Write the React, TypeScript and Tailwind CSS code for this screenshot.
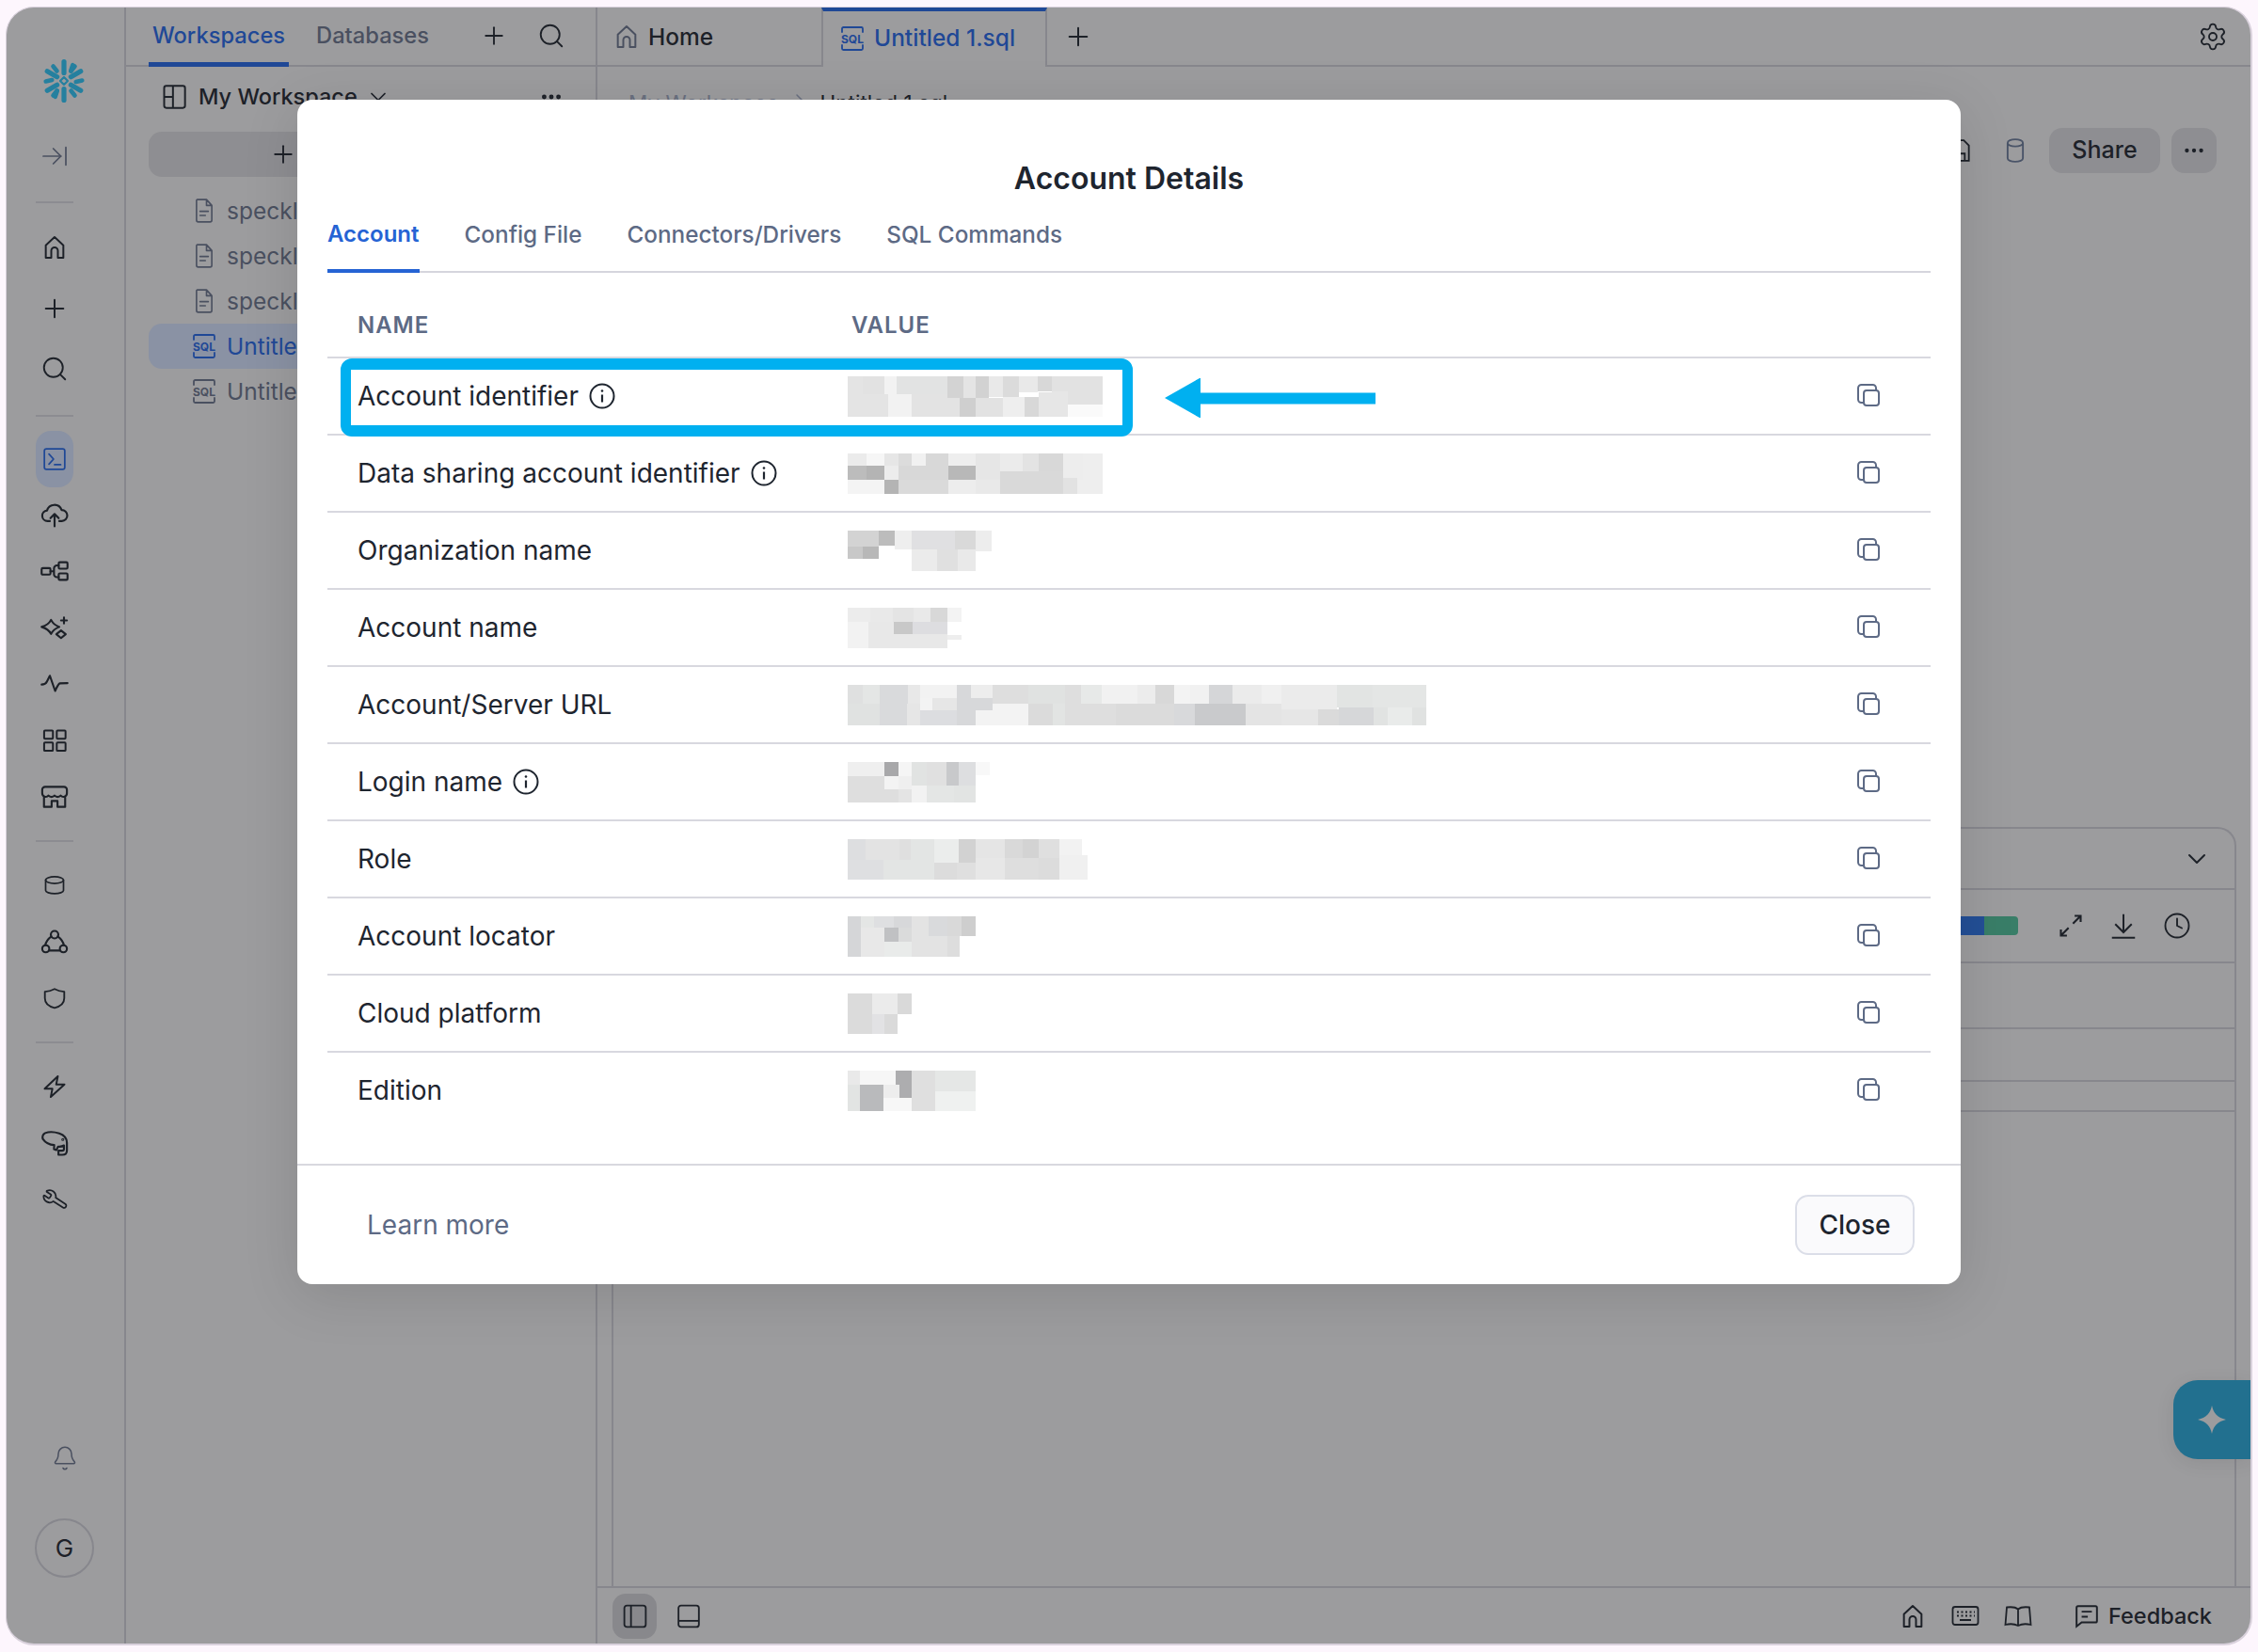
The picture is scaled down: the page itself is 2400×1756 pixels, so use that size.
import React from "react";
import { ArrowRightToLine, Plus, Search, Settings, ChevronDown, Wrench, Bell, Ellipsis, Clock, ChevronRight } from "lucide-react";

type IconProps = { size?: number; className?: string; sw?: number; children?: React.ReactNode };
const Ic = ({ size = 28, className = "", sw = 1.7, children }: IconProps) => (
  <svg width={size} height={size} viewBox="0 0 24 24" fill="none" stroke="currentColor" strokeWidth={sw} strokeLinejoin="round" strokeLinecap="round" className={className}>
    {children}
  </svg>
);

const HomeIc = (p: IconProps) => <Ic {...p}><path d="M4 21.500V10L12 2.500l8 7.500v11.500h-5v-6.500a3 3 0 0 0-6 0v6.500H4z" /></Ic>;
const TerminalIc = (p: IconProps) => <Ic {...p}><rect x="2" y="2" width="20" height="20" rx="2" /><path d="M6.500 7l4.500 5-4.500 5M12 17.500h6" /></Ic>;
const CloudIc = (p: IconProps) => <Ic {...p} size={30}><path d="M8 17.500H6a4.500 4.500 0 0 1-.4-8.980A6.500 6.500 0 0 1 18 8.100a4.700 4.700 0 0 1 .2 9.400H16" /><path d="M12 22v-10M8.500 15l3.500-3.500 3.500 3.500" /></Ic>;
const FlowIc = (p: IconProps) => <Ic {...p} size={30}><rect x="1" y="9.500" width="7.500" height="5.500" rx="1" /><rect x="15.500" y="4.500" width="7.500" height="5.500" rx="1" /><rect x="15.500" y="14" width="7.500" height="5.500" rx="1" /><path d="M8.500 12.200h3M15.500 7.200h-1.500a2.500 2.500 0 0 0-2.500 2.500v5a2.500 2.500 0 0 0 2.500 2.500h1.500" /></Ic>;
const SparkIc = (p: IconProps) => <Ic {...p} size={30}><path d="M9 5.500c1.400 2.800 3.200 4.600 7 6-3.800 1.400-5.600 3.200-7 6-1.400-2.800-3.200-4.600-8-6 4.800-1.400 6.600-3.200 8-6z" /><path d="M17.500 14.500l4 3.200-4 3.300-4-3.300zM20 3.500v5M17.500 6h5" /></Ic>;
const PulseIc = (p: IconProps) => <Ic {...p} size={30}><path d="M1 12.500c2.500 0 3.500-.5 4.500-2.500L8 5l4.500 13c1.500-3.500 2.500-6 4-6.500l6.500-.2" /></Ic>;
const GridIc = (p: IconProps) => <Ic {...p}><rect x="2.500" y="3" width="8" height="7.500" rx=".8" /><rect x="14" y="3" width="8" height="7.500" rx=".8" /><rect x="2.500" y="14" width="8" height="7.500" rx=".8" /><rect x="14" y="14" width="8" height="7.500" rx=".8" /></Ic>;
const StoreIc = (p: IconProps) => <Ic {...p} size={30}><path d="M4 3.500h16a2.500 2.500 0 0 1 2.500 2.500v3a3 3 0 0 1-5.300 1.900 3.500 3.500 0 0 1-5.200 0 3.500 3.500 0 0 1-5.200 0A3 3 0 0 1 1.500 9V6A2.500 2.500 0 0 1 4 3.500z" /><path d="M3 12.500V20.500h6.500v-5h5v5H21v-8" /></Ic>;
const DbIc = (p: IconProps) => <Ic {...p}><ellipse cx="12" cy="6.500" rx="9.500" ry="3.600" /><path d="M2.500 6.500v11c0 1.800 4.200 3.300 9.500 3.300s9.500-1.500 9.500-3.300v-11" /></Ic>;
const TriIc = (p: IconProps) => <Ic {...p} size={30}><circle cx="12" cy="6" r="3.200" /><circle cx="4.500" cy="18" r="3" /><circle cx="19.500" cy="18" r="3" /><path d="M9.300 7.500C6.500 9.500 4.800 12 4 15M14.700 7.500c2.800 2 4.500 4.500 5.300 7.500M7.500 19.500h9" /></Ic>;
const ShieldIc = (p: IconProps) => <Ic {...p}><path d="M12 3c3 1.600 6 2.400 9.500 2.600V12c0 5-4 8.200-9.500 9.500C6.500 20.200 2.500 17 2.500 12V5.600C6 5.400 9 4.600 12 3z" /></Ic>;
const BoltIc = (p: IconProps) => <Ic {...p}><path d="M15 2.500 3 14h7l-1.500 7.500L21 10h-7.500z" /></Ic>;
const ElephantIc = (p: IconProps) => <Ic {...p} size={30}><path d="M4 3.500c4-1.500 8-1 12 .3 4 1.400 6.500 4 6.500 8v6.500c0 2.400-1.600 3.700-4 3.700h-3.200v-3.500h3.200c1 0 1.500-.5 1.500-1.500V14c-1.500 1-3 1.200-5 1l-1.500 3-2-.8.2-3.500C7 13.500 3.700 11 2 8.500 1.500 6.500 2.200 4.500 4 3.500z" /><circle cx="19" cy="9" r=".4" /></Ic>;
const InfoIc = () => (
  <svg width="28" height="28" viewBox="0 0 28 28" fill="none" stroke="#1e252f" strokeWidth="2" className="ml-[11px]">
    <circle cx="14" cy="14" r="12.500" />
    <path d="M14 12.500v8" strokeWidth="2.200" />
    <circle cx="14" cy="8.500" r="1.300" fill="#1e252f" stroke="none" />
  </svg>
);
const CopyIc = () => (
  <svg width="24" height="24" viewBox="0 0 24 24" fill="none" stroke="#5d6a85" strokeWidth="2">
    <rect x="1" y="1" width="19" height="19" rx="3.500" />
    <rect x="7" y="7" width="16" height="16" rx="3" fill="#fff" />
  </svg>
);
const FileIc = () => (
  <Ic size={30} sw={1.300} className="text-[#4a5060]">
    <path d="M6 2.500h8l4.500 5V20a1.500 1.500 0 0 1-1.500 1.500H7A1.500 1.500 0 0 1 5.500 20V3.500A1 1 0 0 1 6 2.500zM14 2.500v5h4.500M8.500 12.500h7M8.500 16h4.500" />
  </Ic>
);
const SqlIc = ({ color }: { color: string }) => (
  <svg width="30" height="28" viewBox="0 0 30 28" fill="none" stroke={color} strokeWidth="1.800" strokeLinecap="round">
    <path d="M4 7V3.500A1.500 1.500 0 0 1 5.500 2h19A1.500 1.500 0 0 1 26 3.500V7M4 21v3.500A1.500 1.500 0 0 0 5.500 26h19a1.500 1.500 0 0 0 1.500-1.500V21" />
    <text x="15" y="18.500" fontSize="12" fontWeight="700" textAnchor="middle" fill={color} stroke="none" fontFamily="Inter, sans-serif">SQL</text>
  </svg>
);
const SnowLogo = () => (
  <svg width="48" height="48" viewBox="0 0 48 48" fill="none" stroke="#25809f" strokeWidth="5.200" strokeLinecap="round" strokeLinejoin="round">
    {[0, 60, 120, 180, 240, 300].map((a) => (
      <g key={a} transform={`rotate(${a} 24 24)`}>
        <path d="M24 15.500V3.500" />
        {a % 180 === 0 ? <path d="M16.500 13.500l-4-5M31.500 13.500l4-5" strokeWidth="4.600" /> : <path d="M18.500 12.500l-4.500-5" strokeWidth="4.600" />}
      </g>
    ))}
    <path d="M24 20l4 4-4 4-4-4z" strokeWidth="2.200" />
  </svg>
);

type R = [number, number, number, number, string];
const Mosaic = ({ w, box, rects }: { w: number; box: [number, number, number, number]; rects: R[] }) => (
  <svg width={w} height={43} viewBox={`${box[0]} ${box[1]} ${box[2] - box[0]} ${box[3] - box[1]}`} preserveAspectRatio="none" shapeRendering="crispEdges" className="block">
    {rects.map((r, i) => (
      <rect key={i} x={r[0]} y={r[1]} width={r[2] - r[0]} height={r[3] - r[1]} fill={r[4]} />
    ))}
  </svg>
);

const mos: { w: number; box: [number, number, number, number]; rects: R[] }[] = [
  { w: 271, box: [759, 180, 1113, 308], rects: [
    [759,180,780,245,"#e4e4e4"],[780,180,810,237,"#e2e2e2"],[810,180,827,237,"#f2f2f2"],[827,180,898,237,"#e2e3e3"],[898,180,920,248,"#d3d3d3"],[920,180,936,248,"#e4e4e4"],[936,180,955,248,"#d2d2d2"],[955,180,975,245,"#e9e9e9"],[975,180,997,245,"#dbdbdb"],[997,180,1023,230,"#e9e9e9"],[1023,180,1042,228,"#d8d8d8"],[1042,180,1113,270,"#e2e2e2"],
    [759,245,815,308,"#e4e4e4"],[780,237,815,245,"#e4e4e4"],[815,237,848,308,"#f2f2f2"],[848,237,898,308,"#e3e3e3"],[898,248,915,308,"#e3e3e3"],[915,248,937,308,"#cfcfcf"],[937,248,975,308,"#e2e2e2"],[975,245,1005,308,"#eeeeee"],[1005,245,1024,308,"#d8d8d8"],[1024,230,1065,308,"#e6e6e6"],[1065,270,1113,308,"#fafafa"],[1042,228,1065,270,"#e6e6e6"],
  ]},
  { w: 271, box: [759, 426, 1113, 554], rects: [
    [759,426,785,465,"#ebebeb"],[785,426,810,465,"#f6f6f6"],[810,426,830,465,"#e6e6e6"],[830,426,848,465,"#dcdcdc"],[848,426,868,465,"#f1f1f1"],[868,426,899,465,"#d8d8d8"],[899,426,937,465,"#eeeeee"],
    [759,465,785,510,"#bcbcbc"],[785,465,810,510,"#b4b4b4"],[810,465,830,510,"#ececec"],[830,465,899,510,"#d8d8d8"],[899,465,937,510,"#b8b8b8"],[937,426,971,510,"#e6e6e6"],[971,426,1002,483,"#ebebeb"],[1002,426,1024,483,"#e3e3e3"],[1024,426,1058,483,"#d8d8d8"],[1058,426,1086,510,"#ededed"],[1086,426,1113,554,"#eeeeee"],
    [971,483,1058,554,"#d9d9d9"],[1058,503,1078,554,"#e2e2e2"],[1078,510,1086,554,"#eeeeee"],
    [759,510,810,554,"#f4f4f4"],[810,510,830,554,"#b4b4b4"],[830,510,899,554,"#dadada"],[899,510,937,554,"#ededed"],[937,510,971,554,"#e9e9e9"],
  ]},
  { w: 153, box: [759, 678, 959, 806], rects: [
    [759,678,802,728,"#d3d3d3"],[802,678,825,725,"#bcbcbc"],[825,678,848,738,"#eeeeee"],[848,678,908,738,"#e0e0e2"],[908,678,937,738,"#d9d9d9"],[937,678,959,743,"#ededed"],[759,728,780,768,"#c8c8c8"],[780,728,802,768,"#b8b8b8"],[848,738,883,806,"#ebebeb"],[883,738,912,806,"#e0e0e0"],[912,738,937,806,"#e9e9e9"],
  ]},
  { w: 121, box: [759, 918, 917, 1047], rects: [
    [759,918,790,962,"#ececec"],[790,918,822,962,"#e9e9e9"],[822,918,850,962,"#e4e4e4"],[850,918,874,962,"#e9e9e9"],[874,918,898,962,"#d8d8d8"],[898,918,917,962,"#f3f3f3"],[759,962,788,1047,"#f2f2f2"],[788,962,823,1047,"#e8e8e8"],[823,962,849,1003,"#c8c8c8"],[849,962,898,1005,"#dddde0"],[898,1005,917,1020,"#eeeeee"],[823,1003,898,1047,"#e8e8e8"],
  ]},
  { w: 615, box: [47, 136, 1425, 261], rects: [
    [47,136,82,195,"#dfe0e0"],[82,136,124,195,"#e4e6e5"],[124,136,190,195,"#d9dadc"],[190,136,220,195,"#e8e8e8"],[220,136,307,177,"#f2f2f2"],[220,177,249,215,"#f3f3f3"],[249,177,307,215,"#e6e6e6"],[307,136,340,177,"#d7d8da"],[340,136,392,177,"#ededed"],[307,177,392,215,"#d7d8da"],[392,136,477,195,"#dedede"],[477,136,564,195,"#e0e2e1"],[564,136,603,195,"#dedede"],[603,136,652,195,"#e7e9e8"],[652,136,737,195,"#f1f1f1"],[737,136,780,195,"#ececec"],[780,136,824,195,"#d8d8d8"],[824,136,862,195,"#f3f3f3"],[862,136,907,195,"#f1f1f1"],[907,136,963,195,"#d5d6d8"],[963,136,1034,195,"#ebebeb"],[1034,136,1080,195,"#f0f0f0"],[1080,136,1212,212,"#ebebeb"],[1212,136,1298,206,"#e2e4e3"],[1298,136,1425,206,"#e4e6e5"],
    [47,195,124,261,"#e0e2e1"],[124,195,188,261,"#d9dadc"],[188,195,220,261,"#e6e6e6"],[220,215,307,261,"#dcdde0"],[307,215,352,261,"#d7d8da"],[352,215,392,261,"#f3f3f3"],[392,195,477,261,"#f3f3f3"],[477,195,535,261,"#dbdbdb"],[535,195,564,261,"#e2e4e3"],[564,195,686,261,"#dedede"],[686,195,824,261,"#dbdbdb"],[824,195,874,261,"#d8d9db"],[874,195,995,261,"#c9cacc"],[995,195,1080,261,"#e4e4e4"],[1080,212,1167,261,"#e6e6e6"],[1167,212,1216,261,"#dadada"],[1216,206,1299,261,"#d6d7d9"],[1299,206,1333,261,"#e1e3e2"],[1333,206,1391,261,"#e9ebea"],[1391,206,1425,261,"#e0e2e1"],
  ]},
  { w: 151, box: [47, 375, 385, 499], rects: [
    [47,375,134,418,"#efefef"],[134,375,168,418,"#a8a8aa"],[168,375,199,418,"#f5f5f5"],[199,375,235,447,"#e1e3e2"],[235,375,282,447,"#e0e0e0"],[282,375,311,447,"#c8c9cb"],[311,375,352,447,"#dddee0"],[352,375,385,415,"#f8f8f8"],[47,418,134,499,"#dedede"],[134,418,168,459,"#f3f3f3"],[168,418,199,459,"#efefef"],[134,459,168,499,"#dedede"],[168,459,199,499,"#e4e4e4"],[199,447,235,499,"#f2f2f2"],[235,447,300,499,"#e4e6e5"],[300,447,352,499,"#e2e4e3"],
  ]},
  { w: 255, box: [47, 616, 618, 740], rects: [
    [47,616,90,680,"#dddee0"],[90,616,170,680,"#e3e3e3"],[170,616,198,680,"#dfdfdf"],[198,616,253,680,"#e3e5e4"],[253,616,311,688,"#ebedec"],[311,616,352,688,"#d2d2d2"],[352,616,421,674,"#e5e5e5"],[421,616,464,674,"#d9d9d9"],[464,616,502,674,"#d3d3d3"],[502,616,551,674,"#dfdfdf"],[551,616,605,665,"#f2f2f2"],[47,680,133,740,"#dedfe1"],[133,680,253,740,"#e3e5e4"],[253,688,306,740,"#dcdcdc"],[306,688,352,740,"#dfdfdf"],[352,674,421,740,"#e7e7e7"],[421,674,502,740,"#dedede"],[502,674,551,740,"#dcdcdc"],[551,665,618,740,"#f0f0f0"],
  ]},
  { w: 136, box: [47, 857, 352, 981], rects: [
    [47,857,78,981,"#d5d6d8"],[78,857,110,893,"#e4e6e5"],[110,857,157,893,"#dedfe1"],[157,857,199,893,"#d7d8da"],[78,893,134,981,"#e8e8e8"],[134,893,168,935,"#c0c1c3"],[168,893,199,935,"#dadbdb"],[134,935,199,981,"#e9ebea"],[199,857,240,917,"#e3e3e3"],[240,857,284,917,"#d9dadc"],[284,857,318,917,"#d9d9d9"],[318,857,352,917,"#cecece"],[199,917,284,981,"#e3e3e3"],[284,917,314,981,"#dddddd"],
  ]},
  { w: 68, box: [47, 1086, 199, 1211], rects: [
    [47,1086,105,1211,"#dbdbdb"],[105,1086,166,1150,"#ebebeb"],[166,1086,199,1150,"#d9d9d9"],[105,1150,134,1211,"#e2e2e4"],[134,1150,166,1211,"#dadada"],
  ]},
  { w: 136, box: [47, 1330, 352, 1455], rects: [
    [47,1330,76,1373,"#e9e9e9"],[76,1330,161,1373,"#f6f6f6"],[161,1330,199,1373,"#adadaf"],[47,1373,76,1455,"#e2e4e3"],[76,1373,132,1455,"#b9babc"],[132,1373,170,1414,"#ededed"],[170,1373,199,1414,"#adadaf"],[132,1414,199,1455,"#f7f7f7"],[199,1330,255,1455,"#dfdfdf"],[255,1330,352,1393,"#e5e7e6"],[255,1393,352,1455,"#eff1f0"],
  ]},
];

const rows: { name: string; info?: boolean }[] = [
  { name: "Account identifier", info: true },
  { name: "Data sharing account identifier", info: true },
  { name: "Organization name" },
  { name: "Account name" },
  { name: "Account/Server URL" },
  { name: "Login name", info: true },
  { name: "Role" },
  { name: "Account locator" },
  { name: "Cloud platform" },
  { name: "Edition" },
];

const Cell = ({ h = "h-[60px]", children }: { h?: string; children: React.ReactNode }) => (
  <div className={`${h} w-10 flex items-center justify-center text-[#1d2128]`}>{children}</div>
);
const Sep = ({ mt }: { mt: string }) => <div className={`${mt} h-[2px] w-10 bg-[#8c8c91]`} />;

const Rail = () => (
  <aside className="w-[127px] shrink-0 flex flex-col border-r-2 border-[#87878d]">
    <div className="ml-[37px] mt-[54px] h-12 w-12"><SnowLogo /></div>
    <div className="ml-[31px] flex flex-col">
      <div className="mt-[26px]"><Cell><ArrowRightToLine size={32} strokeWidth={1.300} className="text-[#4a5060]" /></Cell></div>
      <Sep mt="mt-[18px]" />
      <div className="mt-[15px]">
        <Cell h="h-[64.5px]"><HomeIc /></Cell>
        <Cell h="h-[64.5px]"><Plus size={32} strokeWidth={1.500} /></Cell>
        <Cell h="h-[64.5px]"><Search size={30} strokeWidth={1.500} /></Cell>
      </div>
      <Sep mt="mt-4" />
      <div className="mt-[15px] -mb-[1px] h-[60px] w-10 rounded-[16px] bg-[#8a92a4] flex items-center justify-center text-[#1f4896]">
        <TerminalIc size={26} sw={1.600} />
      </div>
      <Cell><CloudIc /></Cell>
      <Cell><FlowIc /></Cell>
      <Cell><SparkIc /></Cell>
      <Cell><PulseIc /></Cell>
      <Cell><GridIc /></Cell>
      <Cell><StoreIc /></Cell>
      <Sep mt="mt-4" />
      <div className="mt-4">
        <Cell><DbIc size={24} /></Cell>
        <Cell><TriIc /></Cell>
        <Cell><ShieldIc size={26} /></Cell>
      </div>
      <Sep mt="mt-4" />
      <div className="mt-4">
        <Cell><BoltIc /></Cell>
        <Cell><ElephantIc /></Cell>
        <Cell><Wrench size={26} strokeWidth={1.600} className="-scale-x-100 rotate-[-12deg]" /></Cell>
      </div>
    </div>
    <div className="mt-auto flex flex-col items-center pb-[70px] pr-[2px]">
      <Bell size={28} strokeWidth={1.300} className="text-[#4a5060]" />
      <div className="mt-[50px] w-[63px] h-[63px] rounded-full border-2 border-[#87878d] flex items-center justify-center text-[26px] text-[#1d2128]">G</div>
    </div>
  </aside>
);

const FileRow = ({ name, sql, active }: { name: string; sql?: boolean; active?: boolean }) => (
  <div className={`h-12 flex items-center rounded-[14px] ${active ? "bg-[#8a92a4] text-[#1f4896]" : "text-[#4a5060]"}`}>
    <div className="ml-[44px] w-[40px] flex items-center">{sql ? <SqlIc color={active ? "#1f4896" : "#4a5060"} /> : <FileIc />}</div>
    <span className="ml-[-1px] text-[24.5px]">{name}</span>
  </div>
);

const Panel = () => (
  <section className="w-[501px] shrink-0 flex flex-col border-r-2 border-[#87878d]">
    <div className="h-[63px] flex items-stretch border-b-2 border-[#87878d] pl-[24px] pr-[32px] shrink-0">
      <div className="h-[63px] px-1 border-b-[5px] border-[#1f4896] flex items-center text-[23.7px] font-medium text-[#1f4896] pt-[2px]">Workspaces</div>
      <div className="ml-[25px] px-1 flex items-center text-[23.7px] font-medium text-[#4a5060] pb-[1px]">Databases</div>
      <div className="ml-auto flex items-center gap-[31px] text-[#1d2128] pb-[1px]">
        <Plus size={30} strokeWidth={1.500} />
        <Search size={30} strokeWidth={1.500} />
      </div>
    </div>
    <div className="flex items-center h-[58px] pl-[37px] pr-[34px] pt-[6px]">
      <svg width="28" height="28" viewBox="0 0 24 24" fill="none" stroke="#1d2128" strokeWidth="1.700"><rect x="3" y="2" width="19" height="20" rx="2" /><path d="M11 2v20M3 12h8" /></svg>
      <span className="ml-3 text-[23.5px] font-medium text-[#1d2128]">My Workspace</span>
      <ChevronDown size={28} strokeWidth={1.500} className="ml-2 text-[#1d2128]" />
      <Ellipsis size={26} strokeWidth={2.500} className="ml-auto text-[#1d2128]" />
    </div>
    <div className="px-[24px] mt-[11px]">
      <div className="h-12 w-[285px] rounded-[14px] bg-[#8e8e92] flex items-center justify-center text-[#1d2128]">
        <Plus size={30} strokeWidth={1.500} />
      </div>
      <div className="mt-3">
        <FileRow name="speckl" />
        <FileRow name="speckl" />
        <FileRow name="speckl" />
        <FileRow name="Untitle" sql active />
        <FileRow name="Untitle" sql />
      </div>
    </div>
  </section>
);

const TabBar = () => (
  <div className="h-[63px] flex shrink-0">
    <div className="w-[238px] border-b-2 border-[#87878d] flex items-center pl-[17px] text-[#1d2128]">
      <HomeIc size={28} className="text-[#4a5060]" />
      <span className="ml-[9px] text-[24.5px] font-medium pt-[2px]">Home</span>
    </div>
    <div className="w-[240px] border-t-4 border-x-2 border-t-[#1f4896] border-x-[#87878d] flex items-center pl-[16px] pb-[2px] text-[#1f4896]">
      <SqlIc color="#1f4896" />
      <span className="ml-[8px] text-[24.5px] font-medium">Untitled 1.sql</span>
    </div>
    <div className="flex-1 border-b-2 border-[#87878d] flex items-center pl-[17px] pr-[24px] justify-between text-[#1d2128]">
      <Plus size={32} strokeWidth={1.500} />
      <Settings size={32} strokeWidth={1.400} />
    </div>
  </div>
);

const Main = () => (
  <main className="flex-1 flex flex-col min-w-0">
    <TabBar />
    <div className="h-[65px] pl-[33px] pt-[22px] flex items-start text-[22.5px] shrink-0">
      <span className="text-[#6a7080]">My Workspace</span>
      <ChevronRight size={24} strokeWidth={1.500} className="mx-[10px] mt-[2px] text-[#6a7080]" />
      <span className="text-[#1d2128]">Untitled 1.sql</span>
    </div>
    <div className="h-12 flex items-center justify-end pr-[36px] shrink-0">
      <svg width="26" height="26" viewBox="0 0 24 24" fill="none" stroke="#1d2128" strokeWidth="1.700" className="mr-[30px]"><path d="M5 2h10l5 5v15H5zM9 22v-7h7v7" /></svg>
      <Ic size={30} sw={1.500} className="text-[#4a5468]"><path d="M5.500 5.500C5.500 3.800 8.400 2.500 12 2.500s6.500 1.300 6.500 3-2.900 3-6.500 3-6.500-1.300-6.500-3zM5.500 5.500v13c0 1.700 2.900 3 6.500 3s6.500-1.300 6.500-3v-13" /></Ic>
      <div className="ml-[21px] h-12 w-[118px] rounded-[14px] bg-[#8e8e92] flex items-center justify-center text-[25px] font-medium text-[#1d2128]">Share</div>
      <div className="ml-3 h-12 w-12 rounded-[14px] bg-[#8e8e92] flex items-center justify-center text-[#1d2128]"><Ellipsis size={26} strokeWidth={2} /></div>
    </div>
    <div className="mt-[695px] mx-[15px] flex-1 flex flex-col border-x-2 border-t-2 border-[#87878d] rounded-t-[20px]">
      <div className="h-[65px] border-b-2 border-[#87878d] flex items-center justify-end pr-[24px] text-[#1d2128]">
        <ChevronDown size={32} strokeWidth={1.500} />
      </div>
      <div className="h-[78px] border-b-2 border-[#87878d] flex items-center pr-[46px] text-[#1d2128]">
        <div className="ml-auto flex h-5 w-[260px] overflow-hidden rounded-r-[4px]">
          <div className="flex-1 bg-[#234f96]" />
          <div className="w-9 bg-[#397e68]" />
        </div>
        <div className="ml-[42px] flex items-center gap-[28px]">
          <svg width="28" height="28" viewBox="0 0 24 24" fill="none" stroke="currentColor" strokeWidth="1.800"><path d="M21 3l-7 7M15.500 3H21v5.500M3 21l7-7M3 15.500V21h5.500" /></svg>
          <svg width="28" height="28" viewBox="0 0 24 24" fill="none" stroke="currentColor" strokeWidth="1.700"><path d="M12 1.500v16M4.500 10.500l7.500 7.500 7.500-7.500M1.500 23h21" /></svg>
          <Clock size={30} strokeWidth={1.500} />
        </div>
      </div>
      <div className="h-[70px] border-b-2 border-[#87878d]" />
      <div className="h-[56px] border-b-2 border-[#87878d]" />
      <div className="h-[32px] border-b-2 border-[#87878d]" />
    </div>
    <footer className="h-[61px] shrink-0 border-t-2 border-[#87878d] flex items-center pl-[16px] pr-[41px] text-[#1d2128]">
      <div className="h-12 w-[47px] rounded-[14px] bg-[#88888c] flex items-center justify-center">
        <svg width="26" height="26" viewBox="0 0 24 24" fill="none" stroke="currentColor" strokeWidth="1.700"><rect x="1.500" y="1.500" width="21" height="21" rx="2.500" /><path d="M8 1.500v21" /></svg>
      </div>
      <svg width="26" height="26" viewBox="0 0 24 24" fill="none" stroke="currentColor" strokeWidth="1.700" className="ml-[21px]"><rect x="2" y="1.500" width="20" height="21" rx="2.500" /><path d="M2 16.500h20" /></svg>
      <div className="ml-auto flex items-center">
        <HomeIc size={28} />
        <svg width="30" height="26" viewBox="0 0 30 26" fill="none" stroke="currentColor" strokeWidth="1.800" className="ml-[27px]">
          <rect x="1.500" y="3" width="27" height="19" rx="2.500" />
          <path d="M6 8.500h2M10.500 8.500h2M15 8.500h2M19.500 8.500h2M24 8.500h1M6 12.500h2M10.500 12.500h2M15 12.500h2M19.500 12.500h2M24 12.500h1M9 17h12" strokeWidth="2" />
        </svg>
        <svg width="30" height="26" viewBox="0 0 30 26" fill="none" stroke="currentColor" strokeWidth="1.800" className="ml-[26px]">
          <path d="M15 5.500C12 3 7 3 3 3.500L1.500 22c4-1 10-.8 13.500 1 3.500-1.800 9.500-2 13.500-1L27 3.500C23 3 18 3 15 5.500zM15 5.500V23" />
        </svg>
        <svg width="26" height="26" viewBox="0 0 24 24" fill="none" stroke="currentColor" strokeWidth="1.800" className="ml-[45px]">
          <path d="M2 3.500A1.500 1.500 0 0 1 3.500 2h17A1.500 1.500 0 0 1 22 3.500v13a1.500 1.500 0 0 1-1.500 1.500H7l-5 4zM7 7.500h10M7 12.500h6" />
        </svg>
        <span className="ml-[10px] text-[23.5px] font-medium">Feedback</span>
      </div>
    </footer>
  </main>
);

const Modal = () => (
  <div className="absolute left-[316px] top-[106px] w-[1768px] h-[1259px] rounded-[16px] bg-white flex flex-col shadow-[0_12px_60px_rgba(0,0,0,0.12)]">
    <h2 className="pt-[64px] text-center text-[32px] leading-[40px] font-semibold text-[#1e252f]">Account Details</h2>
    <div className="mx-[32px] h-[80px] border-b-2 border-[#d5d5dd] flex gap-[48px] text-[24.3px] font-medium text-[#5d6a85]">
      <div className="h-[80px] border-b-4 border-[#2563d4] flex items-center text-[#2563d4] font-semibold text-[24px] pt-[2px]">Account</div>
      <div className="flex items-center">Config File</div>
      <div className="flex items-center">Connectors/Drivers</div>
      <div className="flex items-center">SQL Commands</div>
    </div>
    <div className="mx-[32px] h-[89px] flex items-end pb-[15px] text-[24px] font-semibold tracking-[0.04em] text-[#5d6a85]">
      <div className="w-[557px] pl-[32px]">NAME</div>
      <div>VALUE</div>
    </div>
    <div className="mx-[32px]">
      {rows.map((r, i) => (
        <div key={r.name} className="h-[82px] border-t-[2.5px] border-[#d8d8df] flex items-center">
          <div className="w-[553px] pl-[32px] flex items-center text-[28px] text-[#1e252f]">
            <span>{r.name}</span>
            {r.info && <InfoIc />}
          </div>
          <Mosaic {...mos[i]} />
          <div className="ml-auto mr-[54px] mb-[3px]"><CopyIc /></div>
        </div>
      ))}
    </div>
    <div className="mt-[38px] flex-1 border-t-[2.5px] border-[#d8d8df] flex items-center justify-between pl-[74px] pr-[49px] pb-[1px]">
      <span className="text-[28px] text-[#5d6a85]">Learn more</span>
      <button className="h-16 w-[127px] rounded-[14px] border-2 border-[#dbdee8] bg-[#fafafc] text-[28px] font-medium text-[#1e252f]">Close</button>
    </div>
  </div>
);

export default function App() {
  return (
    <div className="relative w-[2400px] h-[1756px] overflow-hidden bg-[#fdf6fd] pt-[7px] pb-[7px] pl-[6px] pr-[6px] font-[Inter,sans-serif]">
      <div className="relative h-full flex overflow-hidden rounded-[30px] border-t border-l border-r-2 border-b-2 border-[#d9d1dc] bg-[#9c9c9e]">
        <Rail />
        <Panel />
        <Main />
        <div className="absolute right-0 top-[1459px] w-[82px] h-[84px] rounded-l-[26px] bg-[#22708f] flex items-center justify-center shadow-[0_4px_20px_rgba(0,0,0,0.08)]">
          <svg width="32" height="32" viewBox="0 0 32 32" fill="#9c9c9e" className="mr-[1px]"><path d="M16 1c1.500 8 6 13 15 15-9 2-13.500 7-15 15-1.500-8-6-13-15-15 9-2 13.500-7 15-15z" /></svg>
        </div>
      </div>
      <Modal />
      <div className="absolute left-[362px] top-[381px] w-[842px] h-[83px] rounded-[12px] border-x-[11px] border-y-[12px] border-[#00b0f0]" />
      <svg width="226" height="44" viewBox="0 0 226 44" className="absolute left-[1237px] top-[401px]">
        <path d="M1 22 38 1h1v15.500h186v12H39V43h-1z" fill="#00b0f0" />
      </svg>
    </div>
  );
}
